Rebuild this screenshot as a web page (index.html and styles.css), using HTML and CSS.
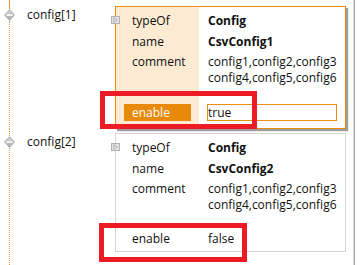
FILE: index.html
```html
<!DOCTYPE html>
<html lang="en">
<head>
  <meta charset="UTF-8">
  <title>Config Tree</title>
  <link rel="stylesheet" href="styles.css">
</head>
<body>

<div class="page">
  <div class="tree">

    <div class="node node-first">
      <div class="node-head">
        <div class="rail">
          <span class="stem"></span>
          <svg class="knob" width="11" height="12" viewBox="0 0 11 12">
            <defs>
              <linearGradient id="kg" x1="0" y1="0" x2="0" y2="1">
                <stop offset="0" stop-color="#d6d6d6"/>
                <stop offset="1" stop-color="#a9a9a9"/>
              </linearGradient>
            </defs>
            <polygon points="5.5,0.5 10.5,6 5.5,11.5 0.5,6" fill="url(#kg)" stroke="#b4b4b4" stroke-linejoin="round"/>
            <rect x="2.5" y="5.2" width="6" height="1.6" fill="#fff"/>
          </svg>
          <span class="trail"></span>
        </div>
        <span class="node-label">config[1]</span>
      </div>

      <div class="card card-selected">
        <svg class="expander" width="9" height="8" viewBox="0 0 9 8">
          <rect x="0.5" y="0.5" width="8" height="7" fill="#e2e2e2" stroke="#b2b2b2"/>
          <polygon points="3,1.8 6.2,4 3,6.2" fill="#fff" stroke="#9c9c9c" stroke-width="0.8"/>
        </svg>
        <div class="row"><span class="key">typeOf</span><span class="val strong">Config</span></div>
        <div class="row"><span class="key">name</span><span class="val strong">CsvConfig1</span></div>
        <div class="row row-multi"><span class="key">comment</span><span class="val">config1,config2,config3<br>config4,config5,config6</span></div>
        <div class="row row-enable">
          <span class="key"><span class="key-hl">enable</span></span>
          <span class="val"><span class="field">true</span></span>
          <span class="mark mark-1"></span>
        </div>
      </div>
    </div>

    <div class="node">
      <div class="node-head">
        <div class="rail">
          <span class="stem"></span>
          <svg class="knob" width="11" height="12" viewBox="0 0 11 12">
            <polygon points="5.5,0.5 10.5,6 5.5,11.5 0.5,6" fill="url(#kg)" stroke="#b4b4b4" stroke-linejoin="round"/>
            <rect x="2.5" y="5.2" width="6" height="1.6" fill="#fff"/>
          </svg>
          <span class="trail"></span>
        </div>
        <span class="node-label">config[2]</span>
      </div>

      <div class="card">
        <svg class="expander" width="9" height="8" viewBox="0 0 9 8">
          <rect x="0.5" y="0.5" width="8" height="7" fill="#e2e2e2" stroke="#b2b2b2"/>
          <polygon points="3,1.8 6.2,4 3,6.2" fill="#fff" stroke="#9c9c9c" stroke-width="0.8"/>
        </svg>
        <div class="row"><span class="key">typeOf</span><span class="val strong">Config</span></div>
        <div class="row"><span class="key">name</span><span class="val strong">CsvConfig2</span></div>
        <div class="row row-multi"><span class="key">comment</span><span class="val">config1,config2,config3<br>config4,config5,config6</span></div>
        <div class="row row-enable">
          <span class="key">enable</span>
          <span class="val">false</span>
          <span class="mark mark-2"></span>
        </div>
      </div>
    </div>

  </div>
  <div class="edge"></div>
</div>

</body>
</html>
```

FILE: styles.css
```css
body {
  margin: 0;
  background-color: #fff;
  font-family: 'Open Sans', 'Noto Sans', sans-serif;
  font-size: 12px;
  color: #111;
  overflow: hidden;
}

.page {
  display: flex;
  height: 265px;
}

.tree {
  width: 346px;
  display: flex;
  flex-direction: column;
}

.node {
  display: flex;
  flex: 1;
}

.node-first {
  flex: none;
}

.node-head {
  width: 115px;
  flex: none;
  display: flex;
}

.rail {
  width: 19px;
  display: flex;
  flex-direction: column;
  align-items: center;
}

.stem {
  width: 0;
  height: 7px;
  border-left: 1px dotted #e89a3a;
}

.node-first .stem {
  height: 9px;
  border-left-style: solid;
  border-left-color: #ea9630;
}

.knob {
  display: block;
  flex: none;
}

.trail {
  flex: 1;
  width: 0;
  border-left: 1px dotted #e89a3a;
}

.node-label {
  margin-left: 8px;
  margin-top: 5px;
  line-height: 16px;
  height: 16px;
}

.node-first .node-label {
  margin-top: 7px;
}

/* property cards */

.card {
  position: relative;
  align-self: flex-start;
  width: 231px;
  box-sizing: border-box;
  margin-top: 4px;
  padding: 3px 0 4px;
  border: 1px solid #d4d4d4;
  background-color: #fff;
}

.card-selected {
  margin-top: 6px;
  padding-bottom: 7px;
  border-color: #e8900c;
  background: linear-gradient(to right, #fcebd2 83px, #fff 83px);
  box-shadow: 2px 2px 1px #9c9c9c;
}

.expander {
  position: absolute;
  left: -5px;
  top: 9px;
  display: block;
}

.row {
  position: relative;
  display: grid;
  grid-template-columns: 83px 1fr;
  height: 21px;
  line-height: 21px;
}

.row-multi {
  height: auto;
  line-height: 16px;
  padding-top: 2px;
}

.row-enable {
  height: 17px;
  line-height: 17px;
  margin-top: 17px;
}

.card-selected .row-enable {
  margin-top: 18px;
}

.key {
  padding-left: 16px;
  white-space: nowrap;
}

.val {
  padding-left: 9px;
  white-space: nowrap;
}

.strong {
  font-weight: bold;
}

.key-hl {
  display: block;
  width: 67px;
  margin-left: -8px;
  padding-left: 8px;
  box-sizing: border-box;
  background-color: #e8890a;
  color: #fff;
}

.field {
  display: block;
  width: 130px;
  height: 17px;
  margin-left: -1px;
  box-sizing: border-box;
  border: 1px solid #e8900c;
  line-height: 15px;
}

/* red annotation frames */

.mark {
  position: absolute;
  box-sizing: border-box;
  border: 5px solid #ed1c24;
  pointer-events: none;
}

.mark-1 {
  left: -16px;
  top: -13px;
  width: 157px;
  height: 38px;
}

.mark-2 {
  left: -17px;
  top: -7px;
  width: 148px;
  height: 39px;
}

.edge {
  width: 2px;
  margin-left: 7px;
  background: linear-gradient(to right, #d8d8d8 1px, #a8a8a8 1px);
}
```
